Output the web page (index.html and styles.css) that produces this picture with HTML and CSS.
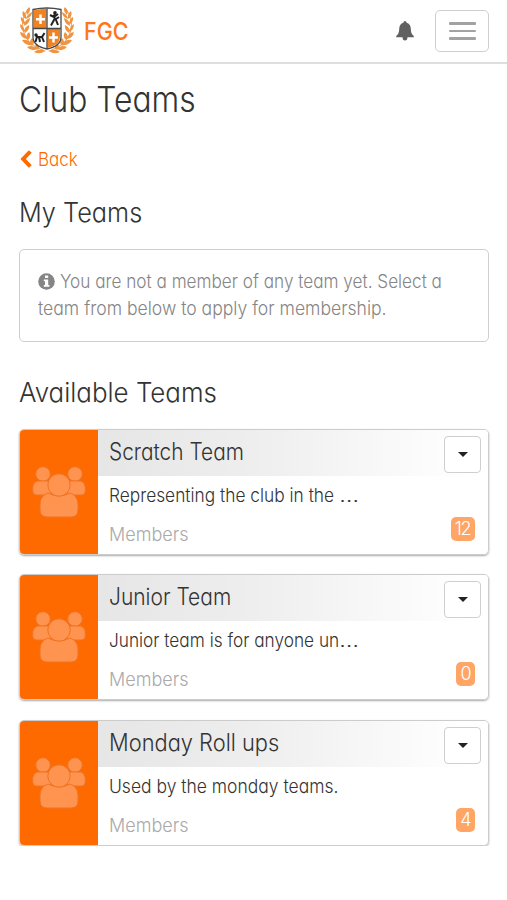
FILE: index.html
```html
<!DOCTYPE html>
<html lang="en">
<head>
<meta charset="utf-8">
<title>Club Teams</title>
<link rel="stylesheet" href="styles.css">
</head>
<body>
<svg class="defs" aria-hidden="true">
  <symbol id="group" viewBox="0 0 54 52">
    <g fill="#ff9350" stroke="#ef7422" stroke-width="1">
      <circle cx="11" cy="8" r="7.3"/><circle cx="43" cy="8" r="7.3"/>
      <path d="M5 15H17L19 29H4Q.7 29 .7 25V21Q.7 17 5 15Z"/>
      <path d="M49 15H37L35 29H50Q53.3 29 53.3 25V21Q53.3 17 49 15Z"/>
      <path d="M16 27Q27 33 38 27Q46 30 46 38V44Q46 51 39 51H15Q8 51 8 44V38Q8 30 16 27Z"/>
      <circle cx="27" cy="19" r="11.2"/>
    </g>
  </symbol>
  <symbol id="wreath" viewBox="0 0 27 48">
    <g fill="none" stroke="#ee9b4c" stroke-width="1" stroke-linecap="round"><path d="M8 3Q1 12 3 24Q6 39 25 45"/></g>
    <g fill="#ee9442">
      <path d="M9 1Q12 4 7 9Q5 5 9 1ZM3 5Q7 8 6 13Q1 10 3 5ZM12 6Q12 11 6 13Q7 8 12 6ZM1 11Q5 13 5 19Q0 16 1 11ZM10 12Q10 17 4 20Q4 14 10 12ZM0 18Q4 20 5 26Q0 24 0 18ZM9 19Q10 24 5 27Q3 22 9 19ZM0 26Q6 27 7 33Q1 32 0 26ZM9 26Q12 30 8 34Q4 30 9 26ZM2 34Q9 33 12 39Q5 40 2 34ZM12 32Q16 36 12 40Q8 36 12 32ZM7 41Q13 38 18 43Q11 46 7 41ZM17 37Q21 40 18 44Q13 41 17 37ZM14 46Q19 42 25 45Q20 49 14 46Z"/>
    </g>
  </symbol>
</svg>

<header class="navbar">
  <a class="brand">
    <svg class="crest" viewBox="0 0 54 48" aria-hidden="true">
      <use href="#wreath" width="27" height="48"/>
      <use href="#wreath" width="27" height="48" transform="translate(54 0) scale(-1 1)"/>
      <path fill="#fff" stroke="#484848" stroke-width="1.3" d="M13 3.500Q27 .5 41 3.500V31Q41 40 27 43Q13 40 13 31Z"/>
      <path fill="#ef8222" d="M14 4.300Q20 3 26.500 2.700V22H14ZM27.500 23H40V31Q40 39 27.500 42Z"/>
      <path stroke="#484848" stroke-width="1.3" d="M27 2.500V43M13 22.500H41"/>
      <path stroke="#fff" stroke-width="2.5" d="M20.500 8.500V18M16 13.300H25M33.500 26.500V36.500M29 31.500H38"/>
      <path fill="none" stroke="#222" stroke-width="2" stroke-linejoin="round" d="M35 6.500L34 11L36 14L38 19M34.500 13L31 19.500M30 9L34 11L38 8M36 13L39 11M15.500 29L18 31H22L24 36M17 30.500L15.500 36M19 31L20 36M22 31L24.500 27"/>
      <circle cx="35" cy="6.700" r="1.800" fill="#222"/><circle cx="16" cy="29" r="1.700" fill="#222"/>
    </svg>
    <span class="fit brand-name">FGC</span>
  </a>
  <div class="tools">
    <svg class="bell" viewBox="0 0 18 20" aria-hidden="true"><path fill="#606060" d="M9 0Q10.600 0 10.600 1.800Q14.800 3 14.800 8Q14.800 13 17.800 15V16.300H.2V15Q3.200 13 3.200 8Q3.200 3 7.400 1.800Q7.400 0 9 0ZM6.500 16H11.500Q11.500 19.500 9 19.500Q6.500 19.500 6.500 16Z"/></svg>
    <button class="toggle" aria-label="Menu"><i></i><i></i><i></i></button>
  </div>
</header>

<main>
  <h1><span class="fit">Club Teams</span></h1>
  <a class="back"><svg viewBox="0 0 12 18" aria-hidden="true"><path d="M10.300 1.500L3.200 9L10.300 16.500" fill="none" stroke="#ff6a00" stroke-width="4"/></svg><span class="fit">Back</span></a>
  <h2 class="mine"><span class="fit">My Teams</span></h2>
  <section class="notice">
    <div class="line"><svg viewBox="0 0 17 17" aria-hidden="true"><circle cx="8.500" cy="8.500" r="8.300" fill="#858585"/><path fill="#fff" d="M7 2.500H10.200V5H7ZM5.800 6.500H10.200V12H11.400V13.800H5.800V12H7V8.200H5.800Z"/></svg><span class="fit n1">You are not a member of any team yet. Select a</span></div>
    <div class="line"><span class="fit n2">team from below to apply for membership.</span></div>
  </section>
  <h2 class="available"><span class="fit">Available Teams</span></h2>

  <div class="teams">
    <article class="card">
      <div class="side"><svg aria-hidden="true"><use href="#group"/></svg></div>
      <div class="content">
        <div class="head"><h3><span class="fit t1">Scratch Team</span></h3><button class="drop" aria-label="Options"></button></div>
        <p class="desc"><span class="fit d1">Representing the club in the <span class="dots">…</span></span></p>
        <div class="foot"><span class="fit members">Members</span><span class="badge"><span>12</span></span></div>
      </div>
    </article>
    <article class="card">
      <div class="side"><svg aria-hidden="true"><use href="#group"/></svg></div>
      <div class="content">
        <div class="head"><h3><span class="fit t2">Junior Team</span></h3><button class="drop" aria-label="Options"></button></div>
        <p class="desc"><span class="fit d2">Junior team is for anyone un<span class="dots">…</span></span></p>
        <div class="foot"><span class="fit members">Members</span><span class="badge"><span>0</span></span></div>
      </div>
    </article>
    <article class="card">
      <div class="side"><svg aria-hidden="true"><use href="#group"/></svg></div>
      <div class="content">
        <div class="head"><h3><span class="fit t3">Monday Roll ups</span></h3><button class="drop" aria-label="Options"></button></div>
        <p class="desc"><span class="fit d3">Used by the monday teams.</span></p>
        <div class="foot"><span class="fit members">Members</span><span class="badge"><span>4</span></span></div>
      </div>
    </article>
  </div>
</main>
</body>
</html>
```
FILE: styles.css
```css
* { box-sizing: border-box; }
body {
  margin: 0;
  background: #fff;
  color: #333;
  font-family: Inter, "Liberation Sans", sans-serif;
  font-weight: 300;
  font-size: 18.5px;
  font-feature-settings: "cv11";
}
h1, h2, h3, p { margin: 0; font-weight: 300; }
button { padding: 0; background: #fff; border: 1px solid #cfcfcf; }
.defs { position: absolute; width: 0; height: 0; }
.fit { display: inline-block; white-space: nowrap; transform-origin: 0 50%; transform: scaleX(.92); }

.navbar {
  height: 64px;
  border-bottom: 2px solid #dedede;
  padding: 0 18px 0 20px;
  display: flex;
  justify-content: space-between;
  align-items: center;
}
.brand { display: flex; align-items: center; color: #ff7518; }
.crest { width: 54px; height: 48px; margin: -2px 10px 0 0; }
.brand-name { font-size: 24.5px; font-weight: 500; line-height: 30px; transform: scaleX(.875); }
.tools { display: flex; align-items: center; }
.bell { width: 18px; height: 20px; margin-right: 21px; }
.toggle {
  width: 54px; height: 42px; border-radius: 5px;
  display: flex; flex-direction: column; align-items: center; justify-content: center; gap: 5px;
}
.toggle i { width: 27px; height: 2.500px; border-radius: 1px; background: #a2a2a2; }

main { padding: 0 18px 0 19px; }
h1 { font-size: 35.5px; line-height: 44px; margin-top: 14px; height: 44px; }
h1 .fit { transform: scaleX(.895); }
.back { display: flex; align-items: center; height: 24px; line-height: 24px; margin-top: 25px; color: #ff6a00; padding-left: 1px; }
.back svg { width: 12px; height: 18px; margin-right: 6px; }
h2 { font-size: 27px; line-height: 34px; height: 34px; }
.mine { margin-top: 25px; }
.mine .fit { transform: scaleX(.937); }
.notice {
  margin-top: 19px; height: 93px; padding: 18px 18px;
  border: 1px solid #cfcfcf; border-radius: 5px; color: #858585;
}
.line { height: 27px; line-height: 27px; display: flex; align-items: center; }
.line svg { width: 17px; height: 17px; margin-right: 5px; flex: none; }
.n1 { transform: scaleX(.928); }
.n2 { transform: scaleX(.95); }
.available { margin-top: 34px; }
.available .fit { transform: scaleX(.96); }

.teams { margin-top: 19px; display: grid; gap: 19.400px; }
.card {
  height: 126px; display: flex; overflow: hidden;
  border: 1px solid #ccc; border-radius: 5px; box-shadow: 0 1px 2px #aaa;
}
.side { width: 78px; flex: none; background: #ff6a00; display: flex; align-items: center; justify-content: center; }
.side svg { width: 54px; height: 52px; }
.content { flex: 1; min-width: 0; }
.head {
  height: 46px; padding: 0 7px 0 11px; display: flex; justify-content: space-between;
  background: linear-gradient(90deg, #e6e6e6, #eee 40%, #fff 95%);
}
h3 { font-size: 23.500px; line-height: 44px; }
.t1 { transform: scaleX(.888); }
.t2 { transform: scaleX(.893); }
.t3 { transform: scaleX(.93); }
.drop { width: 37px; height: 37px; margin-top: 6px; border-radius: 4px; display: grid; place-items: center; }
.drop::after { content: ""; border: 5px solid transparent; border-top-color: #222; border-bottom: 0; }
.desc { padding-left: 11px; height: 38px; line-height: 38px; }
.desc .fit { transform: scaleX(.945); }
.desc .d1 { transform: scaleX(.936); }
.desc .d2 { transform: scaleX(.932); }
.dots { display: inline-block; transform: scaleX(1.35); transform-origin: 0 50%; }
.foot { height: 40px; padding: 0 13px 0 11px; display: flex; justify-content: space-between; }
.members { color: #aaa; line-height: 40px; transform: scaleX(.975); }
.badge { height: 24px; margin-top: 3px; padding: 0 4px; border-radius: 5px; background: #ffa666; color: #fff; line-height: 23px; font-size: 18px; display: flex; }
.badge span { letter-spacing: -1.500px; padding-right: 1px; }
```
